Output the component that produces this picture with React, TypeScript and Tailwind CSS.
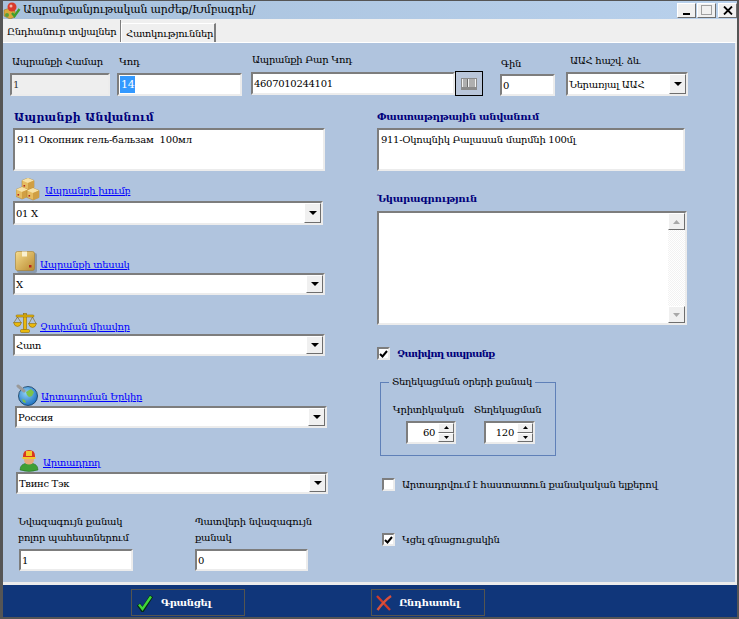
import React from "react";

const FONT = "[font-family:'DejaVu_Serif','DejaVu_Sans',serif]";
const SUNKEN = "border-2 border-t-[#7d7d7d] border-l-[#7d7d7d] border-r-[#ececec] border-b-[#ececec]";
const RAISED = "border border-t-white border-l-white border-r-[#6e6e6e] border-b-[#6e6e6e] bg-[#f0f0f0]";

const AppIcon = () => (
  <svg width="18" height="17" viewBox="0 0 18 17">
    <path d="M1 8l6-2 5 3v6l-5 2-6-3z" fill="#d9a93a" stroke="#8a6a20" strokeWidth="0.5" />
    <circle cx="9" cy="5" r="4.5" fill="#d93a2b" />
    <circle cx="8" cy="4" r="1.5" fill="#f3b7a8" />
    <path d="M9 11l2.5 3 5-7" fill="none" stroke="#3f9f2f" strokeWidth="2.4" />
    <circle cx="4" cy="13" r="2" fill="#5a9e3a" />
  </svg>
);

const Cube = ({ x, y }: { x: number; y: number }) => (
  <g transform={`translate(${x} ${y})`}>
    <path d="M6 0l6 2.5v7L6 12 0 9.500v-7z" fill="#e6bd62" stroke="#a87f2e" strokeWidth="0.5" />
    <path d="M0 2.500L6 5l6-2.500L6 0z" fill="#f7e2a6" />
    <path d="M6 5v7l6-2.500v-7z" fill="#d09f43" />
    <rect x="1.500" y="7" width="1.600" height="1.600" fill="#b3261e" />
  </g>
);

const BoxesIcon = () => (
  <svg width="24" height="23" viewBox="0 0 24 23">
    <Cube x={6} y={0} />
    <Cube x={0} y={9} />
    <Cube x={11} y={10} />
  </svg>
);

const ParcelIcon = () => (
  <svg width="22" height="22" viewBox="0 0 22 22">
    <defs>
      <linearGradient id="parcelFill" x1="0" y1="0" x2="1" y2="1">
        <stop offset="0" stopColor="#f5dc8e" />
        <stop offset="1" stopColor="#b98a30" />
      </linearGradient>
    </defs>
    <rect x="2" y="2" width="20" height="20" rx="2" fill="#6f7f8f" opacity="0.6" />
    <rect x="0.500" y="0.500" width="19" height="19" rx="2" fill="url(#parcelFill)" stroke="#a77f2c" strokeWidth="0.6" />
    <rect x="7" y="0.500" width="5" height="5" fill="#f9f0cf" />
    <rect x="14" y="14" width="2.500" height="2.500" fill="#b3261e" />
  </svg>
);

const ScalesIcon = () => (
  <svg width="24" height="22" viewBox="0 0 24 22">
    <g fill="#e9b80c" stroke="#8f6b06" strokeWidth="0.6">
      <rect x="10.500" y="1.500" width="3" height="16" />
      <rect x="7.500" y="17.500" width="9" height="3" rx="1" />
      <rect x="3" y="3" width="18" height="2" rx="1" />
      <path d="M0.500 10.500h8q-1 4-4 4t-4-4z" />
      <path d="M15.500 11.500h8q-1 4-4 4t-4-4z" />
    </g>
    <path d="M4.500 5L1 10.500M4.500 5L8 10.500M19.500 5L16 11.500M19.500 5L23 11.500" stroke="#7d5e08" strokeWidth="0.6" fill="none" />
  </svg>
);

const GlobeIcon = () => (
  <svg width="22" height="22" viewBox="0 0 22 22">
    <defs>
      <radialGradient id="globeFill" cx="0.4" cy="0.35" r="0.7">
        <stop offset="0" stopColor="#8fd0f5" />
        <stop offset="1" stopColor="#1a6fc0" />
      </radialGradient>
    </defs>
    <circle cx="12" cy="12" r="9.500" fill="url(#globeFill)" stroke="#123a5c" strokeWidth="0.8" />
    <path d="M10 8l5-3 3 3-2 4-3 1-2-2zM6 15l3 1 1 3-3-1z" fill="#7cc24a" />
    <path d="M2 2l6 5" stroke="#9a9a9a" strokeWidth="3" strokeLinecap="round" />
  </svg>
);

const WorkerIcon = () => (
  <svg width="20" height="23" viewBox="0 0 20 23">
    <path d="M1 21q0-7 9-7t9 7q-9 3-18 0z" fill="#3f9f35" stroke="#256b22" strokeWidth="0.5" />
    <ellipse cx="10" cy="11" rx="5" ry="4.500" fill="#e8a878" />
    <path d="M4 7q0-6 6-6t6 6v2H4z" fill="#d9361f" />
    <rect x="7" y="2" width="6" height="5" fill="#f2c92e" />
    <rect x="3.500" y="8" width="13" height="2" fill="#f2c92e" />
  </svg>
);

const GoodIcon = () => (
  <svg width="16" height="18" viewBox="0 0 16 18">
    <path d="M1.500 10.500L5.500 16 14.500 2" fill="none" stroke="#062a12" strokeWidth="4" />
    <path d="M2 10.500L5.500 15 14 2.500" fill="none" stroke="#3fd83a" strokeWidth="2.400" />
  </svg>
);

const CancelIcon = () => (
  <svg width="16" height="16" viewBox="0 0 16 16">
    <path d="M1 1l13 14" stroke="#cf3a2a" strokeWidth="2.400" />
    <path d="M15 1Q8 6 1.500 15" fill="none" stroke="#d9513c" strokeWidth="2.400" />
  </svg>
);

const DownArrow = () => (
  <svg width="8" height="4" viewBox="0 0 8 4">
    <path d="M0 0h8L4 4z" fill="black" />
  </svg>
);

const Combo = ({ value, className }: { value: string; className: string }) => (
  <div className={`${SUNKEN} flex items-stretch bg-white ${className}`}>
    <div className="flex flex-1 items-center whitespace-nowrap pl-[1px] text-black">{value}</div>
    <div className={`${RAISED} flex w-[17px] items-center justify-center`}>
      <DownArrow />
    </div>
  </div>
);

const TextBox = ({ children, className, disabled }: { children?: React.ReactNode; className: string; disabled?: boolean }) => (
  <div className={`${SUNKEN} flex items-center whitespace-pre pl-[1px] ${disabled ? "bg-[#eeeeee] text-[#333333]" : "bg-white text-black"} ${className}`}>
    {children}
  </div>
);

const CheckBox = ({ checked, className }: { checked?: boolean; className?: string }) => (
  <div className={`${SUNKEN} flex h-[13px] w-[13px] shrink-0 items-center justify-center bg-white ${className ?? ""}`}>
    {checked && (
      <svg width="9" height="8" viewBox="0 0 9 8">
        <path d="M1 4l2.500 2.500L8 1" fill="none" stroke="black" strokeWidth="2" />
      </svg>
    )}
  </div>
);

const Spinner = ({ value, className }: { value: string; className: string }) => (
  <div className={`${SUNKEN} flex h-[23px] items-center bg-white ${className}`}>
    <div className="flex-1 pr-[3px] text-right text-black">{value}</div>
    <div className="flex w-[16px] flex-col self-stretch">
      <div className={`${RAISED} flex flex-1 items-center justify-center`}>
        <svg width="5" height="3" viewBox="0 0 5 3"><path d="M0 3h5L2.500 0z" fill="black" /></svg>
      </div>
      <div className={`${RAISED} flex flex-1 items-center justify-center`}>
        <svg width="5" height="3" viewBox="0 0 5 3"><path d="M0 0h5L2.500 3z" fill="black" /></svg>
      </div>
    </div>
  </div>
);

const ScrollBar = () => (
  <div className="flex w-[17px] flex-col justify-between bg-[repeating-conic-gradient(#f2f2f2_0_25%,#ffffff_0_50%)] bg-[length:2px_2px]">
    <div className={`${RAISED} flex h-[17px] items-center justify-center`}>
      <svg width="7" height="4" viewBox="0 0 7 4"><path d="M0 4h7L3.500 0z" fill="#a8a8a8" /></svg>
    </div>
    <div className={`${RAISED} flex h-[17px] items-center justify-center`}>
      <svg width="7" height="4" viewBox="0 0 7 4"><path d="M0 0h7L3.500 4z" fill="#a8a8a8" /></svg>
    </div>
  </div>
);

const IconField = ({ icon, label, value, rowClass, linkClass, comboClass }: {
  icon: React.ReactNode; label: string; value: string; rowClass: string; linkClass: string; comboClass: string;
}) => (
  <div className="flex flex-col">
    <div className={`flex items-end ${rowClass}`}>
      {icon}
      <a className={`whitespace-nowrap leading-[14px] text-[#0000ff] underline ${linkClass}`}>{label}</a>
    </div>
    <Combo value={value} className={comboClass} />
  </div>
);

const WinButton = ({ children, className }: { children: React.ReactNode; className?: string }) => (
  <div className={`${RAISED} flex h-[15px] w-[19px] items-center justify-center ${className ?? ""}`}>{children}</div>
);

const FooterButton = ({ icon, label, className }: { icon: React.ReactNode; label: string; className: string }) => (
  <div className={`flex h-[27px] w-[114px] items-center whitespace-nowrap border border-[#55554f] font-bold text-white ${className}`}>
    {icon}
    <span>{label}</span>
  </div>
);

export default function App() {
  return (
    <div className={`${FONT} flex h-[619px] w-[739px] flex-col overflow-hidden bg-[#555555] pb-[2px] pl-[3px] pr-[2px] pt-[1px] text-[10px] tracking-[-0.3px]`}>
      {/* title bar */}
      <div className="flex h-[18px] items-center bg-gradient-to-r from-[#a8c1dc] to-[#b9d1ec]">
        <AppIcon />
        <span className="ml-[2px] whitespace-nowrap text-[11px] tracking-[-0.2px] text-black">Ապրանքանյութական արժեք/Խմբագրել/</span>
        <div className="ml-auto flex">
          <WinButton className="mr-[1px]"><div className="mt-[8px] h-[2px] w-[7px] bg-black" /></WinButton>
          <WinButton className="mr-[2px]"><div className="h-[10px] w-[11px] border border-[#a0a0a0]" /></WinButton>
          <WinButton>
            <svg width="10" height="9" viewBox="0 0 10 9"><path d="M1 0.500l8 8M9 0.500l-8 8" stroke="black" strokeWidth="1.800" /></svg>
          </WinButton>
        </div>
      </div>

      {/* tabs */}
      <div className="flex h-[23px] items-end whitespace-nowrap bg-[#efefef] text-black">
        <div className="flex h-[22px] w-[118px] items-center border-r border-[#7d7d7d] pl-[4px]">Ընդհանուր տվյալներ</div>
        <div className="flex h-[19px] w-[95px] items-center border-l border-r-2 border-t border-l-white border-r-[#7d7d7d] border-t-white pl-[4px]">Հատկություններ</div>
      </div>

      {/* form */}
      <div className="h-[540px] border-r-2 border-t border-r-[#ececec] border-t-white bg-[#b0c4de] text-black">
        <div className="flex items-end whitespace-nowrap pl-[7px] pt-[10px]">
          <div className="w-[100px]">
            <div className="h-[18px] pl-[2px] leading-[14px]">Ապրանքի Համար</div>
            <TextBox disabled className="h-[23px]">1</TextBox>
          </div>
          <div className="ml-[7px] w-[125px]">
            <div className="h-[18px] pl-[2px] leading-[14px]">Կոդ</div>
            <TextBox className="h-[23px]"><span className="bg-[#3399ff] px-[1px] text-[11px] leading-[17px] text-white">14</span></TextBox>
          </div>
          <div className="ml-[9px] w-[232px]">
            <div className="h-[18px] pl-[1px] leading-[14px]">Ապրանքի Բար Կոդ</div>
            <div className="flex items-center">
              <TextBox className="h-[23px] w-[204px]">4607010244101</TextBox>
              <div className="flex h-[25px] w-[28px] items-center justify-center border border-black bg-[#b9c6da]">
                <svg width="16" height="12" viewBox="0 0 16 12">
                  <rect width="16" height="12" fill="#8b8b8b" />
                  <rect x="1" y="1" width="14" height="8" fill="#f2f2f2" />
                  <path d="M3 1v8M5 1v8M6.500 1v8M9 1v8M11 1v8M13 1v8" stroke="#6d6d6d" />
                </svg>
              </div>
            </div>
          </div>
          <div className="ml-[17px] w-[55px]">
            <div className="h-[17px] pl-[1px] leading-[14px]">Գին</div>
            <TextBox className="h-[22px]">0</TextBox>
          </div>
          <div className="ml-[11px] w-[122px]">
            <div className="h-[18px] pl-[4px] leading-[14px]">ԱԱՀ հաշվ. ձև</div>
            <Combo value="Ներառյալ ԱԱՀ" className="h-[24px]" />
          </div>
        </div>

        <div className="flex">
          <div className="flex w-[374px] flex-col">
            <div className="ml-[11px] mt-[15px] whitespace-nowrap text-[11px] font-bold leading-[14px] tracking-[0.2px] text-[#00007a]">Ապրանքի Անվանում</div>
            <TextBox className="ml-[10px] mt-[3px] h-[43px] w-[312px] !items-start pl-[2px] pt-[2px] tracking-[-0.2px]">911 Окопник гель-бальзам  100мл</TextBox>

            <div className="mt-[6px]">
              <IconField icon={<BoxesIcon />} label="Ապրանքի խումբ" value="01 X" rowClass="ml-[13px] h-[24px]" linkClass="mb-[3px] ml-[5px]" comboClass="ml-[10px] h-[24px] w-[310px]" />
            </div>
            <div className="mt-[24px]">
              <IconField icon={<ParcelIcon />} label="Ապրանքի տեսակ" value="X" rowClass="ml-[12px] h-[24px]" linkClass="mb-[1px] ml-[3px]" comboClass="ml-[10px] h-[22px] w-[312px]" />
            </div>
            <div className="mt-[17px]">
              <IconField icon={<ScalesIcon />} label="Չափման միավոր" value="Հատ" rowClass="ml-[10px] h-[22px]" linkClass="ml-[3px]" comboClass="ml-[10px] h-[22px] w-[312px]" />
            </div>
            <div className="mt-[25px]">
              <IconField icon={<GlobeIcon />} label="Արտադրման Երկիր" value="Россия" rowClass="ml-[13px] h-[25px]" linkClass="mb-[2px] ml-[3px]" comboClass="ml-[12px] h-[22px] w-[312px]" />
            </div>
            <div className="mt-[19px]">
              <IconField icon={<WorkerIcon />} label="Արտադրող" value="Твинс Тэк" rowClass="ml-[16px] h-[25px]" linkClass="mb-[2px] ml-[4px]" comboClass="ml-[13px] h-[22px] w-[312px]" />
            </div>

            <div className="mt-[20px] flex whitespace-nowrap">
              <div className="ml-[15px] w-[177px]">
                <div className="h-[35px] leading-[16px]">Նվազագույն քանակ<br />բոլոր պահեստներում</div>
                <TextBox className="ml-[1px] h-[22px] w-[114px]">1</TextBox>
              </div>
              <div className="w-[180px]">
                <div className="h-[35px] leading-[16px]">Պատվերի նվազագույն<br />քանակ</div>
                <TextBox className="h-[22px] w-[113px]">0</TextBox>
              </div>
            </div>
          </div>

          <div className="flex flex-1 flex-col whitespace-nowrap">
            <div className="mt-[14px] font-bold leading-[14px] text-[#00007a]">Փաստաթղթային անվանում</div>
            <TextBox className="mt-[4px] h-[43px] w-[308px] !items-start pl-[2px] pt-[2px]">911-Օկոպնիկ Բալասան մարմնի 100մլ</TextBox>

            <div className="mt-[21px] font-bold leading-[14px] text-[#00007a]">Նկարագրություն</div>
            <div className={`${SUNKEN} mt-[5px] flex h-[114px] w-[310px] justify-end bg-white`}>
              <ScrollBar />
            </div>

            <div className="mt-[22px] flex items-center">
              <CheckBox checked />
              <span className="ml-[7px] font-bold leading-[13px] tracking-[-0.8px] text-[#00007a]">Չափվող ապրանք</span>
            </div>

            <fieldset className="ml-[3px] mt-[15px] h-[81px] w-[176px] border border-[#5f80b8] px-[8px]">
              <legend className="px-[3px] leading-[14px]">Տեղեկացման օրերի քանակ</legend>
              <div className="mt-[14px] flex">
                <div className="flex w-[79px] flex-col items-center">
                  <span className="leading-[14px]">Կրիտիկական</span>
                  <Spinner value="60" className="ml-[5px] mt-[4px] w-[50px]" />
                </div>
                <div className="flex w-[79px] flex-col items-center">
                  <span className="leading-[14px]">Տեղեկացման</span>
                  <Spinner value="120" className="ml-[4px] mt-[4px] w-[51px]" />
                </div>
              </div>
            </fieldset>

            <div className="ml-[5px] mt-[22px] flex items-center">
              <CheckBox />
              <span className="ml-[7px] leading-[13px]">Արտադրվում է հաստատուն քանակական ելքերով</span>
            </div>
            <div className="ml-[5px] mt-[42px] flex items-center">
              <CheckBox checked />
              <span className="ml-[7px] leading-[13px]">Կցել գնացուցակին</span>
            </div>
          </div>
        </div>
      </div>

      {/* footer */}
      <div className="flex h-[35px] items-start border-t-[3px] border-[#ececec] bg-[#10367a] pt-[4px]">
        <FooterButton icon={<GoodIcon />} label="Գրանցել" className="ml-[128px] gap-[8px] pl-[5px]" />
        <FooterButton icon={<CancelIcon />} label="Ընդհատել" className="ml-[126px] gap-[7px] pl-[4px]" />
      </div>
    </div>
  );
}
